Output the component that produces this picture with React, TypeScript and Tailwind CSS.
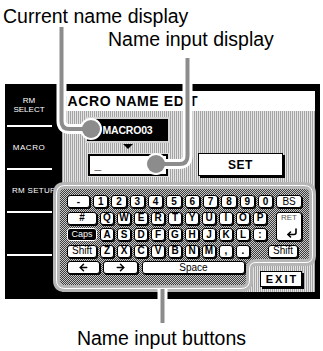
import { ArrowLeft, ArrowRight, CornerDownLeft } from 'lucide-react'

const KEY =
  'flex h-[13px] shrink-0 items-center justify-center rounded-[3px] border border-black bg-white shadow-[1px_1px_0_#000] text-[10px] font-bold leading-none text-black'
const SOFT = 'font-normal text-[9px] text-[#555]'

const DIGITS = ['1', '2', '3', '4', '5', '6', '7', '8', '9', '0']
const ROW_Q = ['Q', 'W', 'E', 'R', 'T', 'Y', 'U', 'I', 'O', 'P']
const ROW_A = ['A', 'S', 'D', 'F', 'G', 'H', 'J', 'K', 'L', ':']
const ROW_Z = ['Z', 'X', 'C', 'V', 'B', 'N', 'M', ',', '.']

const HALFTONE =
  'bg-[repeating-linear-gradient(90deg,#a4a4a4_0px,#a4a4a4_1px,#e4e4e4_1px,#e4e4e4_2px)]'

function Sidebar() {
  return (
    <div className="flex w-[48px] shrink-0 flex-col text-[8px] leading-[9px] text-white">
      <div className="flex h-[41px] flex-col items-center justify-center">
        <span>RM</span>
        <span>SELECT</span>
      </div>
      <div className="ml-[2px] mr-[1px] h-[2px] bg-white" />
      <div className="flex h-[41px] items-center justify-center tracking-[0.5px]">MACRO</div>
      <div className="ml-[2px] mr-[1px] h-[2px] bg-white" />
      <div className="flex h-[41px] items-center whitespace-nowrap pl-[7px] tracking-[0.3px]">RM SETUP</div>
      <div className="ml-[2px] mr-[1px] h-[2px] bg-white" />
      <div className="h-[41px]" />
      <div className="ml-[2px] mr-[1px] h-[2px] bg-white" />
    </div>
  )
}

function KeyboardFrame() {
  const d =
    'M3.5 12 Q3.5 3.5 12 3.5 H251 Q259.5 3.5 259.5 12 V74 Q259.5 80.5 253 80.5 H203 Q196.5 80.5 196.5 87 V98 Q196.5 106.5 188 106.5 H12 Q3.5 106.5 3.5 98 Z'
  return (
    <svg className="absolute inset-0" width="263" height="110" viewBox="0 0 263 110">
      <defs>
        <pattern id="ck" width="2" height="2" patternUnits="userSpaceOnUse">
          <rect width="2" height="2" fill="#c8c8c8" />
          <rect width="1" height="1" fill="#3c3c3c" />
          <rect x="1" y="1" width="1" height="1" fill="#3c3c3c" />
        </pattern>
      </defs>
      <path d={d} fill="url(#ck)" stroke="#b6b6b6" strokeWidth="7" />
      <path d={d} fill="none" stroke="#fff" strokeWidth="1" />
    </svg>
  )
}

function Keyboard() {
  return (
    <div className="relative -ml-[9px] -mr-[1px] mt-[6px] h-[110px]">
      <KeyboardFrame />
      <div className="relative flex flex-col gap-[3.5px] pl-[14px] pt-[13px]">
        <div className="flex gap-[3px]">
          <div className={`${KEY} w-[23px]`}>-</div>
          {DIGITS.map(k => (
            <div key={k} className={`${KEY} w-[15.33px]`}>{k}</div>
          ))}
          <div className={`${KEY} w-[25.7px] ${SOFT}`}>BS</div>
        </div>

        <div className="flex">
          <div className="flex flex-col gap-[3.5px]">
            <div className="flex gap-[3px]">
              <div className={`${KEY} w-[30px]`}>#</div>
              {ROW_Q.map(k => (
                <div key={k} className={`${KEY} w-[14px]`}>{k}</div>
              ))}
            </div>
            <div className="flex gap-[3px]">
              <div className="flex h-[13px] w-[30px] items-center justify-center rounded-[3px] border border-white bg-black text-[9px] leading-none text-white">
                Caps
              </div>
              {ROW_A.map(k => (
                <div key={k} className={`${KEY} w-[14px]`}>{k}</div>
              ))}
            </div>
          </div>
          <div className="ml-[9px] flex w-[26px] flex-col items-center justify-between rounded-[3px] border border-black bg-white pb-[1px] pt-[1px] shadow-[1px_1px_0_#000]">
            <span className="text-[8px] leading-none text-[#555]">RET</span>
            <CornerDownLeft size={12} strokeWidth={3.2} className="ml-[5px]" />
          </div>
        </div>

        <div className="flex gap-[3px]">
          <div className={`${KEY} w-[30px] ${SOFT}`}>Shift</div>
          {ROW_Z.map(k => (
            <div key={k} className={`${KEY} w-[14px]`}>{k}</div>
          ))}
          <div className={`${KEY} ml-[15px] w-[30px] ${SOFT}`}>Shift</div>
        </div>

        <div className="flex items-start">
          <div className={`${KEY} w-[33px]`}>
            <ArrowLeft size={11} strokeWidth={3.2} />
          </div>
          <div className={`${KEY} ml-[3px] w-[35px]`}>
            <ArrowRight size={11} strokeWidth={3.2} />
          </div>
          <div className={`${KEY} ml-[4px] w-[103px] ${SOFT}`}>Space</div>
          <div className="ml-[15px] mt-[10px] flex h-[16px] w-[42px] items-center justify-center border border-black bg-white pl-[2px] text-[11px] font-bold leading-none tracking-[2px] shadow-[2px_2px_0_#000]">
            EXIT
          </div>
        </div>
      </div>
    </div>
  )
}

function Screen() {
  return (
    <div className="ml-[5px] mt-[34.5px] flex h-[215px] w-[315px] bg-black">
      <Sidebar />
      <div className="flex flex-1 flex-col pb-[7px] pl-[9px] pr-[5px] pt-[7px]">
        <div className="flex h-[20px] shrink-0 items-center bg-white">
          <span className="-ml-[6.7px] whitespace-nowrap text-[14px] font-bold leading-none tracking-[0.6px]">
            MACRO NAME EDIT
          </span>
        </div>
        <div className={`flex flex-1 flex-col pt-[8px] ${HALFTONE}`}>
          <div className="flex items-start">
            <div className="ml-[25px] flex w-[81px] flex-col items-center">
              <div className="flex h-[22px] w-[81px] items-center justify-center bg-black text-[10.5px] font-bold leading-none tracking-[-0.2px] text-white ring-2 ring-[#d4d4d4]">
                MACRO03
              </div>
              <div className="mt-[3px] h-0 w-0 border-l-[5px] border-r-[5px] border-t-[5px] border-l-transparent border-r-transparent border-t-black" />
              <div className="mt-[5px] flex h-[22px] w-[80px] items-end border-2 border-black bg-white pb-[3px] pl-[5px] text-[12px] font-bold leading-none ring-1 ring-[#dcdcdc]">
                _
              </div>
            </div>
            <div className="ml-[30px] mt-[34px] flex h-[23px] w-[85px] items-center justify-center border border-black bg-white text-[12px] font-bold leading-none tracking-[0.5px] shadow-[2px_2px_0_#000]">
              SET
            </div>
          </div>
          <Keyboard />
        </div>
      </div>
    </div>
  )
}

function Callouts() {
  const lines = [
    'M61.5 27 V121 Q61.5 129 69.5 129 H84',
    'M187.5 58 V156 Q187.5 164 179.5 164 H163',
    'M162.5 289 V323',
  ]
  return (
    <svg className="pointer-events-none absolute inset-0" width="323" height="351" viewBox="0 0 323 351">
      {lines.map(d => (
        <path key={`h${d}`} d={d} fill="none" stroke="#fff" strokeWidth="10" />
      ))}
      <circle cx="91" cy="129" r="11" fill="#fff" />
      <circle cx="156" cy="164" r="11" fill="#fff" />
      {lines.map(d => (
        <path key={d} d={d} fill="none" stroke="#8c8c8c" strokeWidth="4" />
      ))}
      <circle cx="91" cy="129" r="9" fill="#8c8c8c" />
      <circle cx="156" cy="164" r="9" fill="#8c8c8c" />
    </svg>
  )
}

export default function App() {
  return (
    <div className="relative h-[351px] w-[323px] overflow-hidden bg-white font-['Liberation_Sans',Arial,sans-serif] text-black">
      <div className="pt-[7px]">
        <p className="ml-[3px] whitespace-nowrap text-[19.5px] leading-none">Current name display</p>
        <p className="ml-[108px] mt-[3.5px] whitespace-nowrap text-[19.5px] leading-none">Name input display</p>
      </div>
      <Screen />
      <p className="mt-[29.5px] whitespace-nowrap text-center text-[19.5px] leading-none">Name input buttons</p>
      <Callouts />
    </div>
  )
}
